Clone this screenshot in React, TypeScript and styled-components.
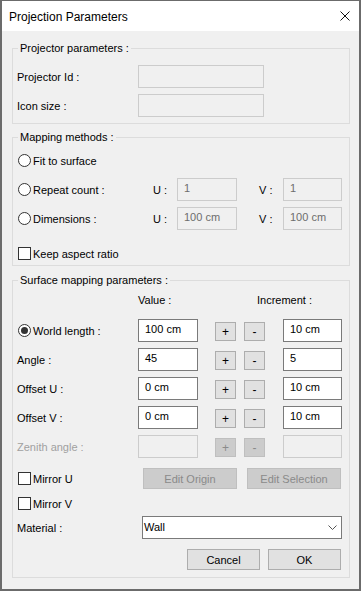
import React from 'react';
import styled, { createGlobalStyle } from 'styled-components';

const Global = createGlobalStyle`
  html, body { margin: 0; padding: 0; background: #ffffff; }
  body { font-family: "Liberation Sans", Arial, sans-serif; font-size: 11px; color: #000; }
  * { box-sizing: border-box; }
`;

const Window = styled.div`
  width: 361px;
  height: 591px;
  border-style: solid;
  border-color: #6b6b6b;
  border-width: 1px 2px 2px 2px;
  background: #f0f0f0;
  display: flex;
  flex-direction: column;
`;

const TitleBar = styled.div`
  flex: none;
  height: 30px;
  background: #ffffff;
  display: flex;
  align-items: center;
  justify-content: space-between;
  padding: 1px 9px 0 7px;
`;

const Title = styled.span`
  font-size: 12px;
  color: #000;
`;

const CloseIcon = styled.svg`
  display: block;
  margin-top: -2px;
`;

const Body = styled.div`
  flex: 1;
  display: flex;
  flex-direction: column;
  padding-top: 10px;
`;

const Group = styled.fieldset<{ $mt: number; $pb: number }>`
  margin: ${(p) => p.$mt}px 9px 0 10px;
  padding: 0 0 ${(p) => p.$pb}px 0;
  border: 1px solid #dcdcdc;
  min-width: 0;
`;

const Legend = styled.legend`
  margin-left: 5px;
  padding: 0 2px;
  line-height: 14px;
  font-size: 11px;
  color: #000;
`;

const Row = styled.div<{ $h: number; $mt: number; $end?: boolean }>`
  display: flex;
  align-items: center;
  height: ${(p) => p.$h}px;
  margin-top: ${(p) => p.$mt}px;
  padding-left: 4px;
  padding-right: ${(p) => (p.$end ? 8 : 0)}px;
  justify-content: ${(p) => (p.$end ? 'flex-end' : 'flex-start')};
`;

const Label = styled.span<{ $w: number; $ml?: number; $disabled?: boolean }>`
  flex: none;
  width: ${(p) => p.$w}px;
  margin-left: ${(p) => p.$ml ?? 0}px;
  color: ${(p) => (p.$disabled ? '#a0a0a0' : '#000')};
  white-space: nowrap;
`;

const Option = styled.label<{ $w: number }>`
  flex: none;
  width: ${(p) => p.$w}px;
  display: flex;
  align-items: center;
  gap: 2px;
  white-space: nowrap;
`;

const Radio = styled.span<{ $checked?: boolean }>`
  flex: none;
  width: 13px;
  height: 13px;
  margin-left: 1px;
  border: 1px solid #333333;
  border-radius: 50%;
  background: #ffffff;
  display: flex;
  align-items: center;
  justify-content: center;
  &::after {
    content: '';
    display: ${(p) => (p.$checked ? 'block' : 'none')};
    width: 7px;
    height: 7px;
    border-radius: 50%;
    background: #333333;
  }
`;

const Check = styled.span`
  flex: none;
  width: 13px;
  height: 13px;
  margin-left: 1px;
  border: 1px solid #333333;
  background: #ffffff;
`;

const TextBox = styled.div<{ $w: number; $ml?: number; $disabled?: boolean }>`
  flex: none;
  width: ${(p) => p.$w}px;
  height: 23px;
  margin-left: ${(p) => p.$ml ?? 0}px;
  border: 1px solid ${(p) => (p.$disabled ? '#cccccc' : '#7a7a7a')};
  background: ${(p) => (p.$disabled ? '#f0f0f0' : '#ffffff')};
  color: ${(p) => (p.$disabled ? '#6d6d6d' : '#000')};
  display: flex;
  align-items: center;
  padding: 0 6px 3px 6px;
  white-space: nowrap;
`;

const StepButton = styled.div<{ $ml: number; $disabled?: boolean }>`
  flex: none;
  width: 21px;
  height: 19px;
  margin-top: 1px;
  margin-left: ${(p) => p.$ml}px;
  border: 1px solid ${(p) => (p.$disabled ? '#bfbfbf' : '#adadad')};
  background: ${(p) => (p.$disabled ? '#cccccc' : '#e1e1e1')};
  color: ${(p) => (p.$disabled ? '#8a8a8a' : '#000')};
  display: flex;
  align-items: center;
  justify-content: center;
  padding-top: 1px;
  font-size: 12px;
`;

const PushButton = styled.div<{ $w: number; $ml?: number; $disabled?: boolean }>`
  flex: none;
  width: ${(p) => p.$w}px;
  height: 21px;
  margin-left: ${(p) => p.$ml ?? 0}px;
  border: 1px solid ${(p) => (p.$disabled ? '#bfbfbf' : '#adadad')};
  background: ${(p) => (p.$disabled ? '#cccccc' : '#e1e1e1')};
  color: ${(p) => (p.$disabled ? '#8a8a8a' : '#000')};
  display: flex;
  align-items: center;
  justify-content: center;
  font-size: 11px;
  white-space: nowrap;
`;

const Select = styled.div`
  flex: none;
  width: 200px;
  height: 23px;
  border: 1px solid #7a7a7a;
  background: #ffffff;
  display: flex;
  align-items: center;
  justify-content: space-between;
  padding: 0 4px 1px 1px;
  font-size: 11px;
`;

type StepRowProps = {
  label: React.ReactNode;
  value: string;
  inc: string;
  mt: number;
  disabled?: boolean;
};

const StepRow = ({ label, value, inc, mt, disabled }: StepRowProps) => (
  <Row $h={23} $mt={mt}>
    {label}
    <TextBox $w={60} $disabled={disabled}>{value}</TextBox>
    <StepButton $ml={17} $disabled={disabled}>+</StepButton>
    <StepButton $ml={8} $disabled={disabled}>-</StepButton>
    <TextBox $w={59} $ml={18} $disabled={disabled}>{inc}</TextBox>
  </Row>
);

export default function App() {
  return (
    <>
      <Global />
      <Window>
        <TitleBar>
          <Title>Projection Parameters</Title>
          <CloseIcon width="10" height="10" viewBox="0 0 10 10">
            <path d="M0.5 0.5 L9.5 9.5 M9.5 0.5 L0.5 9.5" stroke="#111" strokeWidth="1" fill="none" />
          </CloseIcon>
        </TitleBar>
        <Body>
          <Group $mt={0} $pb={6}>
            <Legend>Projector parameters :</Legend>
            <Row $h={23} $mt={10}>
              <Label $w={121}>Projector Id :</Label>
              <TextBox $w={126} $disabled />
            </Row>
            <Row $h={23} $mt={6}>
              <Label $w={121}>Icon size :</Label>
              <TextBox $w={126} $disabled />
            </Row>
          </Group>

          <Group $mt={6} $pb={4}>
            <Legend>Mapping methods :</Legend>
            <Row $h={23} $mt={5}>
              <Option $w={136}><Radio />Fit to surface</Option>
            </Row>
            <Row $h={23} $mt={6}>
              <Option $w={136}><Radio />Repeat count :</Option>
              <Label $w={24}>U :</Label>
              <TextBox $w={60} $disabled>1</TextBox>
              <Label $w={24} $ml={22}>V :</Label>
              <TextBox $w={59} $disabled>1</TextBox>
            </Row>
            <Row $h={23} $mt={6}>
              <Option $w={136}><Radio />Dimensions :</Option>
              <Label $w={24}>U :</Label>
              <TextBox $w={60} $disabled>100 cm</TextBox>
              <Label $w={24} $ml={22}>V :</Label>
              <TextBox $w={59} $disabled>100 cm</TextBox>
            </Row>
            <Row $h={15} $mt={16}>
              <Option $w={200}><Check />Keep aspect ratio</Option>
            </Row>
          </Group>

          <Group $mt={7} $pb={7}>
            <Legend>Surface mapping parameters :</Legend>
            <Row $h={14} $mt={6}>
              <Label $w={121} />
              <Label $w={119}>Value :</Label>
              <Label $w={80}>Increment :</Label>
            </Row>
            <StepRow
              mt={12}
              label={<Option $w={121}><Radio $checked />World length :</Option>}
              value="100 cm"
              inc="10 cm"
            />
            <StepRow mt={6} label={<Label $w={121}>Angle :</Label>} value="45" inc="5" />
            <StepRow mt={6} label={<Label $w={121}>Offset U :</Label>} value="0 cm" inc="10 cm" />
            <StepRow mt={6} label={<Label $w={121}>Offset V :</Label>} value="0 cm" inc="10 cm" />
            <StepRow mt={6} label={<Label $w={121} $disabled>Zenith angle :</Label>} value="" inc="" disabled />
            <Row $h={21} $mt={10}>
              <Option $w={126}><Check />Mirror U</Option>
              <PushButton $w={94} $disabled>Edit Origin</PushButton>
              <PushButton $w={94} $ml={10} $disabled>Edit Selection</PushButton>
            </Row>
            <Row $h={15} $mt={7}>
              <Option $w={126}><Check />Mirror V</Option>
            </Row>
            <Row $h={23} $mt={5}>
              <Label $w={125}>Material :</Label>
              <Select>
                <span>Wall</span>
                <svg width="9" height="5" viewBox="0 0 9 5">
                  <path d="M0.5 0.5 L4.5 4.5 L8.5 0.5" stroke="#555" strokeWidth="1" fill="none" />
                </svg>
              </Select>
            </Row>
            <Row $h={21} $mt={10} $end>
              <PushButton $w={73}>Cancel</PushButton>
              <PushButton $w={73} $ml={8}>OK</PushButton>
            </Row>
          </Group>
        </Body>
      </Window>
    </>
  );
}
